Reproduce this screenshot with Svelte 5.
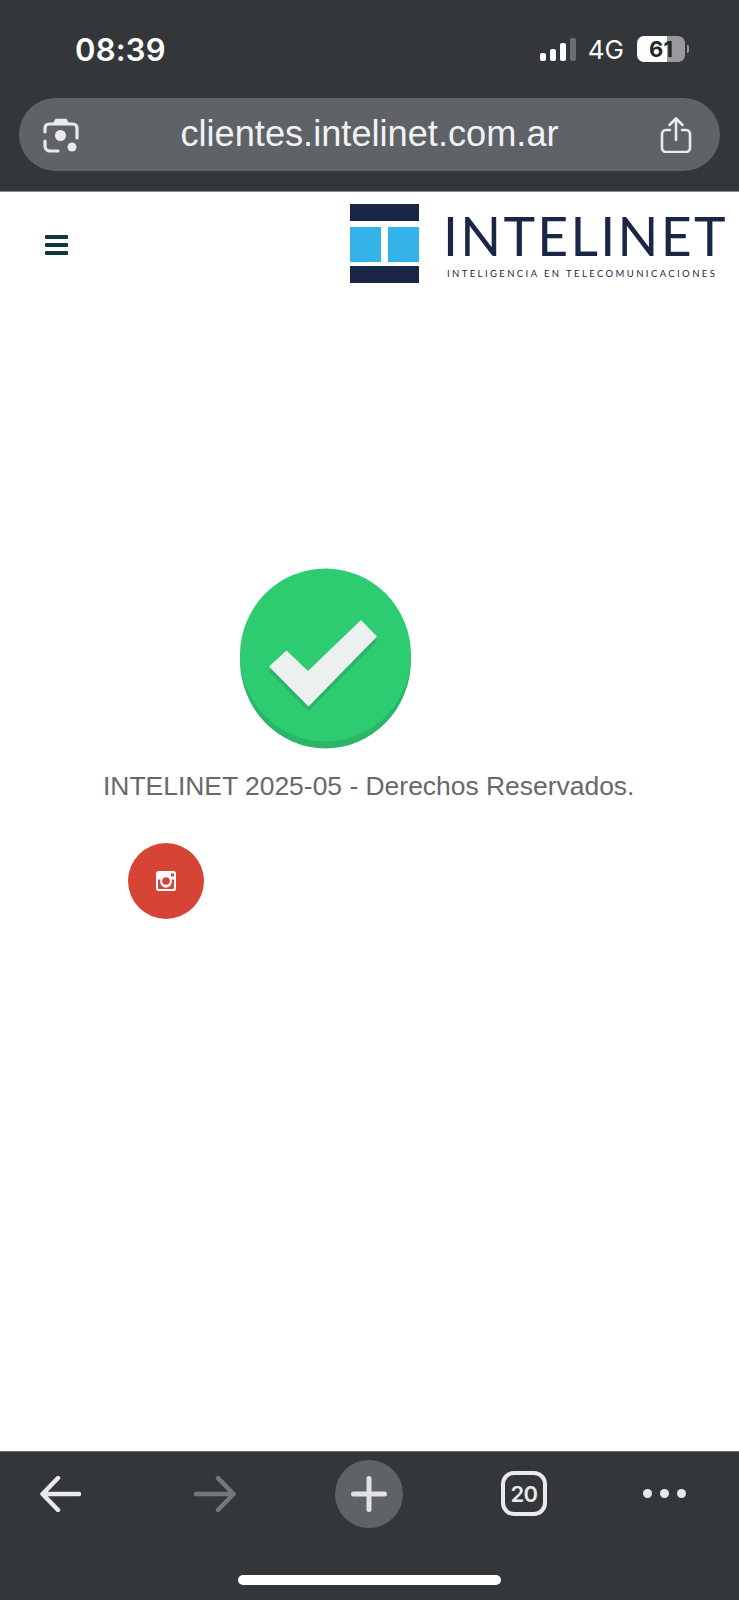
<script>
  const bars = [8, 12, 18, 23];
</script>

<div class="phone">
  <div class="topbar">
    <div class="status">
      <span class="time">08:39</span>
      <div class="status-right">
        <div class="signal">
          {#each bars as h, i}
            <i class:off={i === 3} style="height: {h}px"></i>
          {/each}
        </div>
        <span class="net">4G</span>
        <div class="battery"><span>61</span></div>
        <i class="nub"></i>
      </div>
    </div>
    <div class="urlbar">
      <svg class="scan" width="36" height="36" viewBox="0 0 36 36" fill="none" stroke="#e8eaed" stroke-width="3.2" stroke-linecap="round">
        <path d="M2 15V11a4 4 0 0 1 4-4h24a4 4 0 0 1 4 4v10" />
        <path d="M2 24v5a5 5 0 0 0 5 5h8" />
        <path d="M11 6l2-3.500h10l2 3.500z" fill="#e8eaed" stroke-width="1.500" />
        <circle cx="17.500" cy="18.500" r="5.500" fill="#e8eaed" stroke="none" />
        <circle cx="29" cy="30" r="4.500" fill="#e8eaed" stroke="none" />
      </svg>
      <span class="url">clientes.intelinet.com.ar</span>
      <svg width="32" height="36" viewBox="0 0 32 36" fill="none" stroke="#e8eaed" stroke-width="2.600" stroke-linecap="round" stroke-linejoin="round">
        <path d="M10 13H6a4 4 0 0 0-4 4v14a4 4 0 0 0 4 4h20a4 4 0 0 0 4-4V17a4 4 0 0 0-4-4h-4" />
        <path d="M16 23V2M9.500 8L16 1.500 22.500 8" />
      </svg>
    </div>
  </div>

  <main class="content">
    <header class="site-head">
      <div class="burger"><i></i><i></i><i></i></div>
      <div class="logo">
        <div class="mark">
          <div class="navy"></div>
          <div class="blues"><i></i><i></i></div>
          <div class="navy"></div>
        </div>
        <div class="wordmark">
          <div class="name">INTELINET</div>
          <div class="tag">INTELIGENCIA EN TELECOMUNICACIONES</div>
        </div>
      </div>
    </header>

    <svg class="check" width="173" height="181" viewBox="0 0 173 181">
      <ellipse cx="86.500" cy="92" rx="85.500" ry="88.500" fill="#2bb568" />
      <ellipse cx="86.500" cy="87" rx="85.500" ry="86.500" fill="#2ecc71" />
      <polygon points="122,57 138,73.500 69.500,143.500 30,103.500 47.500,87 69,108" fill="#2bb568" />
      <polygon points="122,52 138,68.500 69.500,138.500 30,98.500 47.500,82.500 69,103" fill="#ecf0f1" />
    </svg>

    <p class="legal">INTELINET 2025-05 - Derechos Reservados.</p>

    <a class="insta" href="#top" aria-label="Instagram">
      <svg width="20" height="20" viewBox="0 0 20 20">
        <path fill-rule="evenodd" fill="#fff" d="M2.500 0h15A2.500 2.500 0 0 1 20 2.500v15a2.500 2.500 0 0 1-2.500 2.500h-15A2.500 2.500 0 0 1 0 17.500v-15A2.500 2.500 0 0 1 2.500 0zM15 2.500v3h3v-3zM2 8.500V17a1 1 0 0 0 1 1h14a1 1 0 0 0 1-1V8.500h-2.400a6 6 0 1 1-11.200 0zM10 6.200a3.800 3.800 0 1 0 0 7.600 3.800 3.800 0 0 0 0-7.600z" />
      </svg>
    </a>
  </main>

  <div class="bottombar">
    <div class="toolbar">
      <svg class="back" width="41" height="36" viewBox="0 0 41 36" fill="none" stroke="#e8eaed" stroke-width="4.500" stroke-linecap="round" stroke-linejoin="round">
        <path d="M39 18H3M18 2L2.500 18 18 34" />
      </svg>
      <svg class="fwd" width="42" height="36" viewBox="0 0 42 36" fill="none" stroke="#75787b" stroke-width="4.500" stroke-linecap="round" stroke-linejoin="round">
        <path d="M2 18h36M24 2l15.500 16L24 34" />
      </svg>
      <div class="plus">
        <svg width="36" height="36" viewBox="0 0 36 36" fill="none" stroke="#e0e2e5" stroke-width="5" stroke-linecap="round">
          <path d="M18 2.500v31M2.500 18h31" />
        </svg>
      </div>
      <div class="tabs">20</div>
      <div class="dots"><i></i><i></i><i></i></div>
    </div>
    <div class="home"></div>
  </div>
</div>

<style>
  :global(body) {
    margin: 0;
    background: #fff;
  }

  .phone {
    width: 739px;
    height: 1600px;
    display: flex;
    flex-direction: column;
    overflow: hidden;
    font-family: "Liberation Sans", Arial, sans-serif;
  }

  .topbar {
    height: 192px;
    box-sizing: border-box;
    background: #33373a;
    border-bottom: 1px solid #8a8c8e;
  }

  .status {
    height: 98px;
    display: flex;
    align-items: center;
    justify-content: space-between;
    padding: 0 50px 0 75px;
  }

  .time {
    font-family: Inter, sans-serif;
    font-size: 31px;
    font-weight: 600;
    letter-spacing: 0.200px;
    color: #fff;
  }

  .status-right {
    display: flex;
    align-items: center;
  }

  .signal {
    display: flex;
    align-items: flex-end;
    gap: 4px;
    height: 24px;
    margin-right: 12px;
  }

  .signal i {
    width: 6px;
    background: #fff;
    border-radius: 2px;
  }

  .signal i.off {
    background: #6c6f72;
  }

  .net {
    font-family: Inter, sans-serif;
    font-size: 26px;
    font-weight: 400;
    color: #fff;
    margin-right: 13px;
  }

  .battery {
    width: 48px;
    height: 26px;
    border-radius: 7px;
    background: linear-gradient(to right, #fff 0 62%, #98999b 62%);
    display: flex;
    align-items: center;
    justify-content: center;
  }

  .battery span {
    font-family: Inter, sans-serif;
    font-size: 22px;
    font-weight: 700;
    color: #222426;
  }

  .nub {
    width: 2px;
    height: 8px;
    margin-left: 2px;
    background: #98999b;
    border-radius: 0 2px 2px 0;
  }

  .urlbar {
    margin: 0 19px;
    height: 73px;
    border-radius: 37px;
    background: #5f6367;
    display: flex;
    align-items: center;
    padding: 0 28px 0 24px;
  }

  .url {
    flex: 1;
    text-align: center;
    font-size: 36.200px;
    color: #f1f2f3;
    margin-top: -2px;
  }

  .content {
    flex: 1;
    background: #fff;
  }

  .site-head {
    display: flex;
    justify-content: space-between;
    align-items: center;
    padding: 12px 8px 0 45px;
  }

  .burger {
    display: flex;
    flex-direction: column;
    gap: 4px;
    margin-top: 2px;
  }

  .burger i {
    display: block;
    width: 23px;
    height: 4px;
    border-radius: 1px;
    background: #12343b;
  }

  .logo {
    display: flex;
    gap: 28px;
  }

  .mark {
    width: 69px;
    display: flex;
    flex-direction: column;
  }

  .navy {
    height: 17px;
    background: #1a2646;
  }

  .blues {
    display: flex;
    justify-content: space-between;
    margin: 6px 0 4px;
  }

  .blues i {
    display: block;
    width: 31px;
    height: 35px;
    background: #33b3e8;
  }

  .wordmark {
    width: 284px;
    color: #1a2646;
    font-family: Lato, sans-serif;
    white-space: nowrap;
  }

  .name {
    font-size: 53.500px;
    line-height: 39px;
    margin: 12px 0 0 -4px;
    letter-spacing: 2.300px;
    font-weight: 400;
  }

  .tag {
    font-size: 9.500px;
    line-height: 10px;
    margin-top: 14px;
    letter-spacing: 2.400px;
    font-weight: 400;
  }

  .check {
    display: block;
    margin: 285px 0 0 239px;
  }

  .legal {
    margin: 22px 0 0 103px;
    font-size: 26.450px;
    line-height: 30px;
    color: #686868;
    white-space: nowrap;
  }

  .insta {
    margin: 42px 0 0 128px;
    width: 76px;
    height: 76px;
    border-radius: 50%;
    background: #d64435;
    display: flex;
    align-items: center;
    justify-content: center;
  }

  .bottombar {
    height: 149px;
    box-sizing: border-box;
    background: #33373a;
    border-top: 1px solid #6a6d70;
  }

  .toolbar {
    height: 83px;
    display: flex;
    align-items: center;
    padding-left: 40px;
  }

  .fwd {
    margin-left: 113px;
  }

  .plus {
    width: 68px;
    height: 68px;
    margin-left: 99px;
    border-radius: 50%;
    background: #5f6367;
    display: flex;
    align-items: center;
    justify-content: center;
  }

  .tabs {
    width: 46px;
    height: 45px;
    margin-left: 98px;
    box-sizing: border-box;
    border: 4px solid #e8eaed;
    border-radius: 13px;
    color: #e8eaed;
    font-family: Inter, sans-serif;
    font-size: 22px;
    font-weight: 600;
    display: flex;
    align-items: center;
    justify-content: center;
    letter-spacing: -0.500px;
  }

  .dots {
    margin-left: 96px;
    display: flex;
    gap: 8px;
  }

  .dots i {
    display: block;
    width: 9px;
    height: 9px;
    border-radius: 50%;
    background: #e8eaed;
  }

  .home {
    width: 263px;
    height: 10px;
    margin: 40px 0 0 238px;
    border-radius: 5px;
    background: #fff;
  }
</style>
